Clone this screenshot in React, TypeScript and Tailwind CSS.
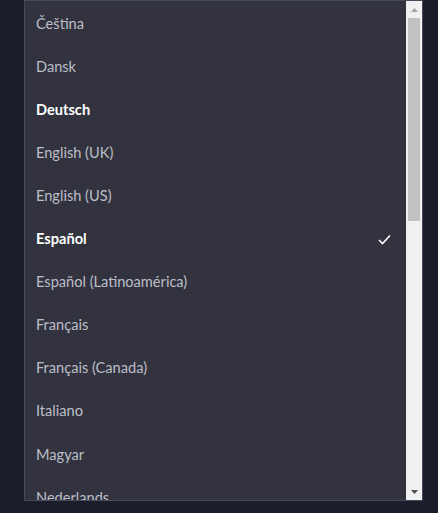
import React from "react";

const langs = [
  "Čeština",
  "Dansk",
  "Deutsch",
  "English (UK)",
  "English (US)",
  "Español",
  "Español (Latinoamérica)",
  "Français",
  "Français (Canada)",
  "Italiano",
  "Magyar",
  "Nederlands",
];

export default function App() {
  return (
    <div
      className="w-[438px] h-[513px] bg-[#1c1d2b] pl-[24px]"
      style={{ fontFamily: "Lato, 'Noto Sans', sans-serif" }}
    >
      <div className="w-[399px] h-[501px] border border-[#474a5a] bg-[#32333f] flex">
        <div className="flex-1 overflow-hidden pt-[1px]">
          {langs.map((l) => {
            const bold = l === "Deutsch" || l === "Español";
            const checked = l === "Español";
            return (
              <div
                key={l}
                className={`h-[43.1px] shrink-0 flex items-center justify-between pl-[11px] pr-[15px] text-[14.6px] ${
                  bold ? "font-bold text-white" : "text-[#bcbec8]"
                }`}
              >
                <span>{l}</span>
                {checked && (
                  <svg width="13" height="11" viewBox="0 0 13 11" fill="none">
                    <path d="M1 6l3.5 3.5L12 1.5" stroke="#ffffff" strokeWidth="1.6" />
                  </svg>
                )}
              </div>
            );
          })}
        </div>
        <div className="w-[16px] h-full bg-[#f1f1f1] flex flex-col items-center">
          <div className="h-[17px] w-full flex items-center justify-center">
            <svg width="7" height="4" viewBox="0 0 7 4">
              <path d="M3.5 0L7 4H0z" fill="#a3a3a3" />
            </svg>
          </div>
          <div className="w-[12px] h-[203px] bg-[#c1c1c1]" />
          <div className="flex-1" />
          <div className="h-[17px] w-full flex items-center justify-center">
            <svg width="7" height="4" viewBox="0 0 7 4">
              <path d="M0 0H7L3.5 4z" fill="#505050" />
            </svg>
          </div>
        </div>
      </div>
    </div>
  );
}
